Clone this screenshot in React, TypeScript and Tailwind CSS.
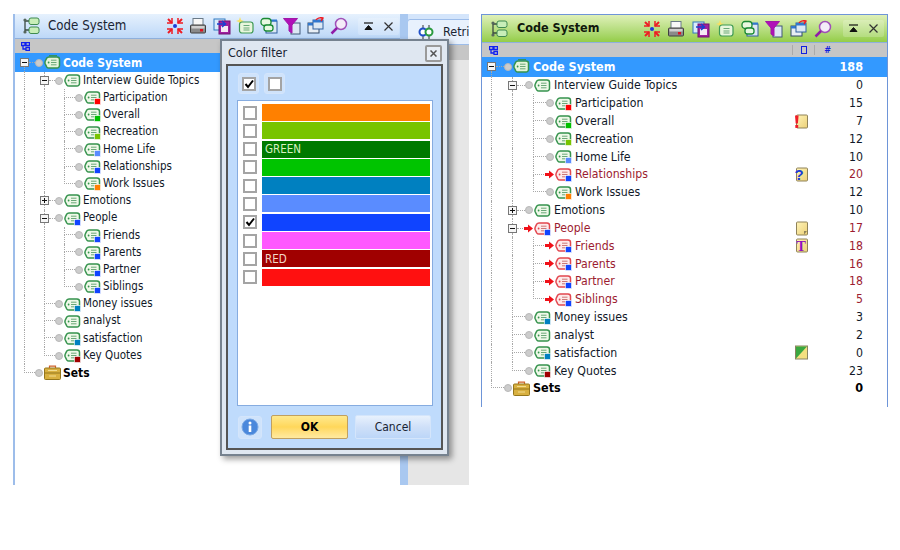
import type { ReactNode } from "react";

type Row = {
  label: string;
  depth: number;
  color?: string;
  count: number;
  memo?: "alert" | "question" | "note" | "text" | "split";
  active?: boolean;
  toggle?: "minus" | "plus";
  last?: boolean;
  kind?: "root" | "sets";
};

const rows: Row[] = [
  { label: "Code System", depth: 0, count: 188, toggle: "minus", kind: "root" },
  { label: "Interview Guide Topics", depth: 1, count: 0, toggle: "minus" },
  { label: "Participation", depth: 2, color: "#ff0000", count: 15 },
  { label: "Overall", depth: 2, color: "#00c000", count: 7, memo: "alert" },
  { label: "Recreation", depth: 2, color: "#78c400", count: 12 },
  { label: "Home Life", depth: 2, color: "#5a8cff", count: 10 },
  { label: "Relationships", depth: 2, color: "#1044ff", count: 20, memo: "question", active: true },
  { label: "Work Issues", depth: 2, color: "#ff8000", count: 12, last: true },
  { label: "Emotions", depth: 1, count: 10, toggle: "plus" },
  { label: "People", depth: 1, color: "#1044ff", count: 17, memo: "note", toggle: "minus", active: true },
  { label: "Friends", depth: 2, color: "#1044ff", count: 18, memo: "text", active: true },
  { label: "Parents", depth: 2, color: "#1044ff", count: 16, active: true },
  { label: "Partner", depth: 2, color: "#1044ff", count: 18, active: true },
  { label: "Siblings", depth: 2, color: "#1044ff", count: 5, active: true, last: true },
  { label: "Money issues", depth: 1, color: "#0080c0", count: 3 },
  { label: "analyst", depth: 1, count: 2 },
  { label: "satisfaction", depth: 1, color: "#0080c0", count: 0, memo: "split" },
  { label: "Key Quotes", depth: 1, color: "#a00000", count: 23, last: true },
  { label: "Sets", depth: 0, count: 0, last: true, kind: "sets" },
];

const swatches = [
  { color: "bg-[#ff8000]" },
  { color: "bg-[#78c400]" },
  { color: "bg-[#007a00]", label: "GREEN", text: "text-[#d8f0c0]" },
  { color: "bg-[#00c400]" },
  { color: "bg-[#0080c0]" },
  { color: "bg-[#5a8cff]" },
  { color: "bg-[#1044ff]", checked: true },
  { color: "bg-[#ff58ff]" },
  { color: "bg-[#a00000]", label: "RED", text: "text-[#f4d8c8]" },
  { color: "bg-[#ff1010]" },
];

const leftSize = {
  row: "h-[17.2px]",
  rootRow: "h-[19px]",
  col: "w-5",
  branch: "w-[15px]",
  text: "text-[11.5px]",
  strong: "text-[12px]",
  gap: "ml-[2px]",
};

const rightSize = {
  row: "h-[17.83px]",
  rootRow: "h-[19.5px]",
  col: "w-[21px]",
  branch: "w-[17px]",
  text: "text-[12.2px]",
  strong: "text-[12.5px]",
  gap: "ml-[3px]",
};

const dots = "border-[#a8a8a8] border-dotted";

function CodeTag({ color, active, root }: { color?: string; active?: boolean; root?: boolean }) {
  const stroke = active ? "#e2474f" : "#36934e";
  const fill = active ? "#fdeaea" : root ? "#e4f4da" : "#eef8e8";
  return (
    <svg width="17" height="15" viewBox="0 0 17 15" className="shrink-0">
      {root && <path d="M5 0.600h8" stroke={stroke} strokeWidth="1" fill="none" />}
      <path
        d="M5 2H13a2.500 2.500 0 0 1 2.500 2.500v6A2.500 2.500 0 0 1 13 13H5Q3.500 13 2.700 11.800L1.300 9Q0.600 7.500 1.300 6L2.700 3.200Q3.500 2 5 2Z"
        fill={fill}
        stroke={stroke}
        strokeWidth="1.500"
      />
      <circle cx="4.600" cy="7.500" r="0.900" fill={stroke} />
      <path d="M7 5.200h5.500M7 7.500h5.500M7 9.800h5.500" stroke={active ? "#c77" : "#6aa878"} strokeWidth="1" />
      {color && (
        <rect x="10.500" y="8.500" width="6" height="6" fill={color} stroke="#fff" strokeWidth="0.600" />
      )}
    </svg>
  );
}

function SetsIcon() {
  return (
    <svg width="17" height="15" viewBox="0 0 17 15" className="shrink-0">
      <path d="M5.500 3V1.200h6V3" fill="none" stroke="#d0602a" strokeWidth="1.200" />
      <rect x="0.500" y="3" width="16" height="11.500" rx="1" fill="#d8b040" stroke="#94761c" />
      <path d="M1 8h15" stroke="#94761c" />
      <path d="M4 5.500h9M5 11h7" stroke="#f2dc90" />
    </svg>
  );
}

function Toggle({ type }: { type: "minus" | "plus" }) {
  return (
    <svg width="9" height="9" viewBox="0 0 9 9" className="shrink-0">
      <rect x="0.500" y="0.500" width="8" height="8" fill="#f6f6f6" stroke="#777" />
      <path d="M2 4.500h5" stroke="#111" />
      {type === "plus" && <path d="M4.500 2v5" stroke="#111" />}
    </svg>
  );
}

function RedArrow() {
  return (
    <svg width="9" height="9" viewBox="0 0 9 9" className="shrink-0">
      <path d="M0 3h4V0.500L9 4.500 4 8.500V6H0Z" fill="#f01018" />
    </svg>
  );
}

function Memo({ type }: { type: NonNullable<Row["memo"]> }) {
  return (
    <svg width="15" height="15" viewBox="0 0 15 15">
      <defs>
        <linearGradient id="memoFill" x1="0" y1="0" x2="1" y2="1">
          <stop offset="0" stopColor="#fff4b8" />
          <stop offset="1" stopColor="#ecd078" />
        </linearGradient>
      </defs>
      {type === "split" ? (
        <>
          <rect x="1.500" y="1" width="12" height="13" fill="#f4e080" stroke="#8a8460" />
          <path d="M2 13.500V1.500h11Z" fill="#3aa840" />
        </>
      ) : (
        <>
          <rect x="2.500" y="1" width="11" height="13" rx="1" fill="url(#memoFill)" stroke="#8f8258" />
          {type === "note" && <path d="M13 10l-3 3.500v-3.500Z" fill="#8f8258" />}
          {type === "alert" && (
            <>
              <path d="M1 1.500h3.600l-.7 8H1.700Z" fill="#f01c28" />
              <rect x="1.300" y="11" width="2.900" height="2.900" fill="#f01c28" />
            </>
          )}
          {type === "question" && (
            <text x="0.500" y="13" fontSize="15" fontWeight="700" fill="#1c3cd8" fontFamily="Liberation Sans, sans-serif">
              ?
            </text>
          )}
          {type === "text" && (
            <text x="2.500" y="12.500" fontSize="14" fontWeight="700" fill="#9010c0" fontFamily="Liberation Serif, serif">
              T
            </text>
          )}
        </>
      )}
    </svg>
  );
}

function Branch({ row, width }: { row: Row; width: string }) {
  if (row.toggle) {
    return (
      <div className={`flex h-full shrink-0 flex-col ${width}`}>
        <div className={`ml-1 min-h-0 flex-1 ${row.depth > 0 ? `border-l ${dots}` : ""}`} />
        <div className="flex items-center">
          <Toggle type={row.toggle} />
          <div className={`flex-1 border-t ${dots}`} />
        </div>
        <div className={`ml-1 min-h-0 flex-1 border-l ${dots}`} />
      </div>
    );
  }
  return (
    <div className={`flex h-full shrink-0 flex-col pl-1 ${width}`}>
      <div className={`h-1/2 border-b border-l ${dots}`} />
      <div className={`h-1/2 ${row.last ? "" : `border-l ${dots}`}`} />
    </div>
  );
}

function TreeRow({ row, size, status }: { row: Row; size: typeof leftSize; status: boolean }) {
  const active = status && row.active;
  const selected = row.kind === "root";
  const bold = row.kind === "root" || row.kind === "sets";
  const tone = selected ? "text-white" : active ? "text-[#9c1c30]" : bold ? "text-black" : "text-[#101828]";
  return (
    <div className={`flex items-center pl-[5px] ${selected ? size.rootRow : size.row} ${selected ? "bg-[#3399ff]" : ""} ${tone}`}>
      {Array.from({ length: row.depth }).map((_, i) => (
        <div key={i} className={`h-full shrink-0 pl-1 ${size.col}`}>
          <div className={`h-full border-l ${dots}`} />
        </div>
      ))}
      <Branch row={row} width={size.branch} />
      {active ? (
        <div className="-ml-[1px] flex w-[9px] shrink-0 justify-end">
          <RedArrow />
        </div>
      ) : (
        <span className="h-2 w-2 shrink-0 rounded-full border border-[#b8b8b8] bg-[#cccccc]" />
      )}
      <span className="ml-[1px] flex shrink-0">
        {row.kind === "sets" ? <SetsIcon /> : <CodeTag color={row.color} active={active} root={selected} />}
      </span>
      <span className={`whitespace-nowrap leading-none ${size.gap} ${bold ? `font-bold ${size.strong}` : size.text}`}>
        {row.label}
      </span>
      {status && (
        <>
          <span className="ml-auto flex w-[15px] shrink-0 justify-center">{row.memo && <Memo type={row.memo} />}</span>
          <span className={`w-[54px] shrink-0 text-right leading-none ${bold ? `font-bold ${size.strong}` : size.text}`}>
            {row.count}
          </span>
        </>
      )}
    </div>
  );
}

function HierarchyIcon() {
  return (
    <svg width="18" height="18" viewBox="0 0 18 18" className="shrink-0">
      <path d="M3 3v12M3 4h4M3 13h4" stroke="#3a4a40" strokeWidth="1.300" fill="none" />
      <circle cx="3" cy="3" r="1.600" fill="#56665c" />
      <circle cx="3" cy="15" r="1.600" fill="#56665c" />
      <rect x="7" y="1" width="10" height="6.500" rx="2" fill="#c8eeb8" stroke="#3f8a50" />
      <rect x="7" y="10" width="10" height="6.500" rx="2" fill="#c8eeb8" stroke="#3f8a50" />
    </svg>
  );
}

function Tool({ children }: { children: ReactNode }) {
  return (
    <svg width="18" height="18" viewBox="0 0 18 18" className="shrink-0">
      {children}
    </svg>
  );
}

const tools = [
  <Tool key="collapse">
    <path d="M2 2l4 4M16 2l-4 4M2 16l4-4M16 16l-4-4" stroke="#ee1c24" strokeWidth="2" />
    <path d="M1 6h5V1M17 6h-5V1M1 12h5v5M17 12h-5v5" stroke="#ee1c24" strokeWidth="1.500" fill="none" />
    <circle cx="9" cy="9" r="2" fill="#1c3cd8" />
  </Tool>,
  <Tool key="print">
    <rect x="4" y="1.500" width="10" height="7" fill="#f8f8f8" stroke="#6a7a88" />
    <rect x="1.500" y="8" width="15" height="8" rx="1" fill="#8a8a8a" stroke="#404040" />
    <rect x="2.500" y="9" width="13" height="2.500" fill="#d0d0d0" />
    <rect x="11" y="12" width="3" height="2.500" fill="#e01020" />
  </Tool>,
  <Tool key="export">
    <rect x="1" y="2" width="11" height="11" fill="#d8ecfc" stroke="#3078c0" />
    <rect x="6" y="4" width="11" height="13" fill="#a020a0" stroke="#701070" />
    <rect x="8" y="9" width="7" height="6" fill="#f4e8f4" />
    <path d="M4 7h8M9 4l3.500 3L9 10" stroke="#1840d0" strokeWidth="1.500" fill="none" />
  </Tool>,
  <Tool key="new">
    <path d="M4 0l1 3 3 1-3 1-1 3-1-3-3-1 3-1Z" fill="#f8e060" />
    <rect x="3.500" y="5" width="13.500" height="11" rx="2.500" fill="#e8f6dc" stroke="#3f9a55" strokeWidth="1.200" />
    <path d="M7.500 8.500h6M7.500 11h6M7.500 13h6" stroke="#6aa878" />
  </Tool>,
  <Tool key="overlap">
    <rect x="6" y="4" width="11" height="12" fill="#dce8f4" stroke="#3060a0" />
    <rect x="9" y="2.500" width="8" height="2" fill="#3078d0" />
    <rect x="1" y="1.500" width="10" height="7" rx="3" fill="#e8f8e0" stroke="#1a8a34" strokeWidth="1.300" />
    <rect x="4" y="8" width="9" height="6" rx="2.500" fill="#e8f8e0" stroke="#1a8a34" strokeWidth="1.300" />
  </Tool>,
  <Tool key="funnel">
    <rect x="8" y="6" width="9" height="11" fill="#dce8f4" stroke="#405878" />
    <path d="M0.500 1.500h14L9 8v8L6 14V8Z" fill="#b010b8" stroke="#a018a8" />
  </Tool>,
  <Tool key="windows">
    <rect x="1" y="6" width="11" height="10" fill="#e8eef4" stroke="#334a68" />
    <rect x="1" y="6" width="11" height="2.500" fill="#3078d0" />
    <rect x="6" y="3" width="10" height="9" fill="#dce8f4" stroke="#3060a0" />
    <rect x="6" y="3" width="10" height="2.500" fill="#3078d0" />
    <path d="M9 3c1-2 4-2.500 6-2M13 0l3 1-2 3" stroke="#ee1c24" strokeWidth="1.400" fill="none" />
  </Tool>,
  <Tool key="search">
    <circle cx="11" cy="7" r="5.500" fill="#f4ecf8" stroke="#a050b8" strokeWidth="1.500" />
    <path d="M7 11l-5.500 5.500" stroke="#901ca8" strokeWidth="2.500" />
  </Tool>,
];

function WindowButtons() {
  return (
    <div className="flex items-center gap-[11px] rounded-[2px] bg-white/20 px-[6px] py-[4px]">
      <svg width="9" height="9" viewBox="0 0 9 9">
        <path d="M0 1h9" stroke="#111" strokeWidth="1.200" />
        <path d="M4.500 3.500L8 7.500H1Z" stroke="#111" fill="#111" />
      </svg>
      <svg width="9" height="9" viewBox="0 0 9 9">
        <path d="M0.500 0.500l8 8M8.500 0.500l-8 8" stroke="#333" strokeWidth="1.200" />
      </svg>
    </div>
  );
}

function SmallTreeIcon() {
  return (
    <svg width="9" height="9" viewBox="0 0 9 9">
      <path d="M0.500 0.500h3.500v3H0.500ZM5 0.500h3.500v3H5ZM5 5.500h3.500v3H5ZM2 4v3h3" stroke="#1020f0" strokeWidth="1.300" fill="none" />
    </svg>
  );
}

function Checkbox({ checked }: { checked?: boolean }) {
  return (
    <span className="flex h-[14px] w-[14px] shrink-0 items-center justify-center border-2 border-[#a4a4a4] bg-white">
      {checked && (
        <svg width="10" height="10" viewBox="0 0 10 10">
          <path d="M1.500 5l2.500 3 5-6.500" stroke="#000" strokeWidth="2" fill="none" />
        </svg>
      )}
    </span>
  );
}

function ColorFilterDialog() {
  return (
    <div className="absolute left-[220px] top-[39px] flex h-[417px] w-[229px] flex-col border-2 border-[#76828f] bg-[#dfe7f1] shadow-[3px_3px_6px_rgba(0,0,0,0.4)]">
      <div className="flex h-[23px] shrink-0 items-center justify-between pl-[6px] pr-[5px] pt-[1px]">
        <span className="text-[12.5px] text-[#1a2433]">Color filter</span>
        <span className="flex h-[17px] w-[17px] items-center justify-center rounded-[2px] border-2 border-[#9a9a9a] bg-[#e8eef6]">
          <svg width="7" height="7" viewBox="0 0 7 7">
            <path d="M0.500 0.500l6 6M6.500 0.500l-6 6" stroke="#555" strokeWidth="1.500" />
          </svg>
        </span>
      </div>
      <div className="mx-[4px] mb-[4px] flex min-h-0 flex-1 flex-col border-2 border-double border-[#555] bg-[#bfdbfc] pl-[9px] pr-[8px]">
        <div className="flex h-[34px] shrink-0 items-center gap-[5px] pl-[1px] pt-[1px]">
          <span className="flex h-[21px] w-[21px] items-center justify-center rounded-[3px] border border-[#d4e5fb] bg-[#cfe3fb]">
            <Checkbox checked />
          </span>
          <span className="flex h-[21px] w-[21px] items-center justify-center rounded-[3px] border border-[#d4e5fb] bg-[#cfe3fb]">
            <Checkbox />
          </span>
        </div>
        <div className="flex h-[306px] shrink-0 flex-col gap-[1.300px] border border-[#86ace0] bg-white pl-[5px] pr-[2px] pt-[3px]">
          {swatches.map((s, i) => (
            <div key={i} className="flex h-[17px] items-center gap-[5px]">
              <Checkbox checked={s.checked} />
              <div className={`flex h-full flex-1 items-center pl-[3px] pt-[1px] text-[11.5px] ${s.color} ${s.text ?? ""}`}>
                {s.label}
              </div>
            </div>
          ))}
        </div>
        <div className="flex flex-1 items-center gap-[9px] pl-[1px]">
          <span className="flex h-[23px] w-[24px] items-center justify-center rounded-[3px] border border-[#d4e5fb] bg-[#cfe3fb]">
            <svg width="18" height="18" viewBox="0 0 18 18">
              <circle cx="9" cy="9" r="8" fill="#4a88dc" stroke="#7aa8e4" />
              <circle cx="9" cy="5" r="1.500" fill="#fff" />
              <rect x="7.700" y="7.500" width="2.600" height="6.500" fill="#fff" />
            </svg>
          </span>
          <button className="h-[24px] w-[77px] rounded-[2px] border border-[#c0a060] bg-gradient-to-b from-[#ffe98c] via-[#ffd75a] to-[#ffeaa0] text-[12px] font-bold text-black">
            OK
          </button>
          <button className="ml-[-2px] h-[24px] w-[76px] rounded-[2px] border border-[#d4e5fb] bg-gradient-to-b from-[#e8f1fd] via-[#cfe0f8] to-[#bcd6f8] text-[12px] text-[#1a2433]">
            Cancel
          </button>
        </div>
      </div>
    </div>
  );
}

export default function App() {
  return (
    <div className="relative flex h-[550px] w-[900px] items-start overflow-hidden bg-white pl-[13px] pt-[14px] font-['DejaVu_Sans_Condensed','DejaVu_Sans',sans-serif]">
      {/* left window */}
      <div className="flex h-[471px] w-[456px] shrink-0 border-l-2 border-[#9dbdea]">
        <div className="flex w-[385px] shrink-0 flex-col bg-white">
          <div className="flex h-[24px] shrink-0 items-center bg-gradient-to-b from-[#e6f1fd] to-[#bdd8f8] pl-[7px] pr-[1px]">
            <HierarchyIcon />
            <span className="ml-[8px] text-[13.200px] text-[#1a2433]">Code System</span>
            <div className="ml-auto flex items-center gap-[5.500px]">{tools}</div>
            <div className="ml-[10px]">
              <WindowButtons />
            </div>
          </div>
          <div className="flex h-[15px] shrink-0 items-center border-t border-[#8fb0dc] bg-[#c6c6c6] pl-[6px]">
            <SmallTreeIcon />
          </div>
          <div>
            {rows.map((row) => (
              <TreeRow key={row.label + row.depth} row={row} size={leftSize} status={false} />
            ))}
          </div>
        </div>
        <div className="w-2 shrink-0 bg-[#a9c8f0]" />
        <div className="flex min-w-0 flex-1 flex-col overflow-hidden bg-[#e6e6e6]">
          <div className="flex h-[31px] shrink-0 items-end bg-[#d4e5fb] pt-[4px]">
            <div className="-ml-[1px] flex h-[26px] w-[70px] shrink-0 items-center gap-[9px] rounded-t-[3px] border border-[#9dbdea] bg-[#e8f1fd] pl-[10px]">
              <svg width="16" height="16" viewBox="0 0 16 16" className="shrink-0">
                <path d="M5 1v14M11 1v14" stroke="#333" />
                <circle cx="5" cy="8" r="3.500" fill="#fff" stroke="#2050c8" strokeWidth="2" />
                <circle cx="11" cy="8" r="3.500" fill="#fff" stroke="#2a9a40" strokeWidth="2" />
              </svg>
              <span className="text-[12.500px] text-[#1a2433]">Retri</span>
            </div>
          </div>
          <div className="h-[15px] shrink-0 bg-[#c6c6c6]" />
        </div>
      </div>

      {/* right window */}
      <div className="ml-3 flex h-[393px] w-[407px] shrink-0 flex-col border-x border-t border-[#6e95d8] bg-white">
        <div className="flex h-[27px] shrink-0 items-center bg-gradient-to-b from-[#dff0b8] to-[#94cd46] pl-[8px] pr-[3px]">
          <HierarchyIcon />
          <span className="ml-[9px] text-[12.500px] font-bold text-[#10180c]">Code System</span>
          <div className="ml-auto flex items-center gap-[6.500px]">{tools}</div>
          <div className="ml-[11px]">
            <WindowButtons />
          </div>
        </div>
        <div className="flex h-[15px] shrink-0 items-center border-t border-[#8fb0dc] bg-[#c6c6c6] pl-[7px]">
          <SmallTreeIcon />
          <div className="ml-auto flex items-center pr-[56px] text-[9px] font-bold leading-none text-[#1020e0]">
            <span className="h-[10px] border-l border-[#aaa]" />
            <span className="ml-[8px] h-[8px] w-[6px] border border-[#1020e0]" />
            <span className="ml-[7px] h-[10px] border-l border-[#aaa]" />
            <span className="ml-[9px]">#</span>
          </div>
        </div>
        <div className="pr-[24px]">
          {rows.map((row) => (
            <div key={row.label + row.depth} className={row.kind === "root" ? "-mr-[24px] bg-[#3399ff] pr-[24px]" : ""}>
              <TreeRow row={row} size={rightSize} status />
            </div>
          ))}
        </div>
      </div>

      <ColorFilterDialog />
    </div>
  );
}
